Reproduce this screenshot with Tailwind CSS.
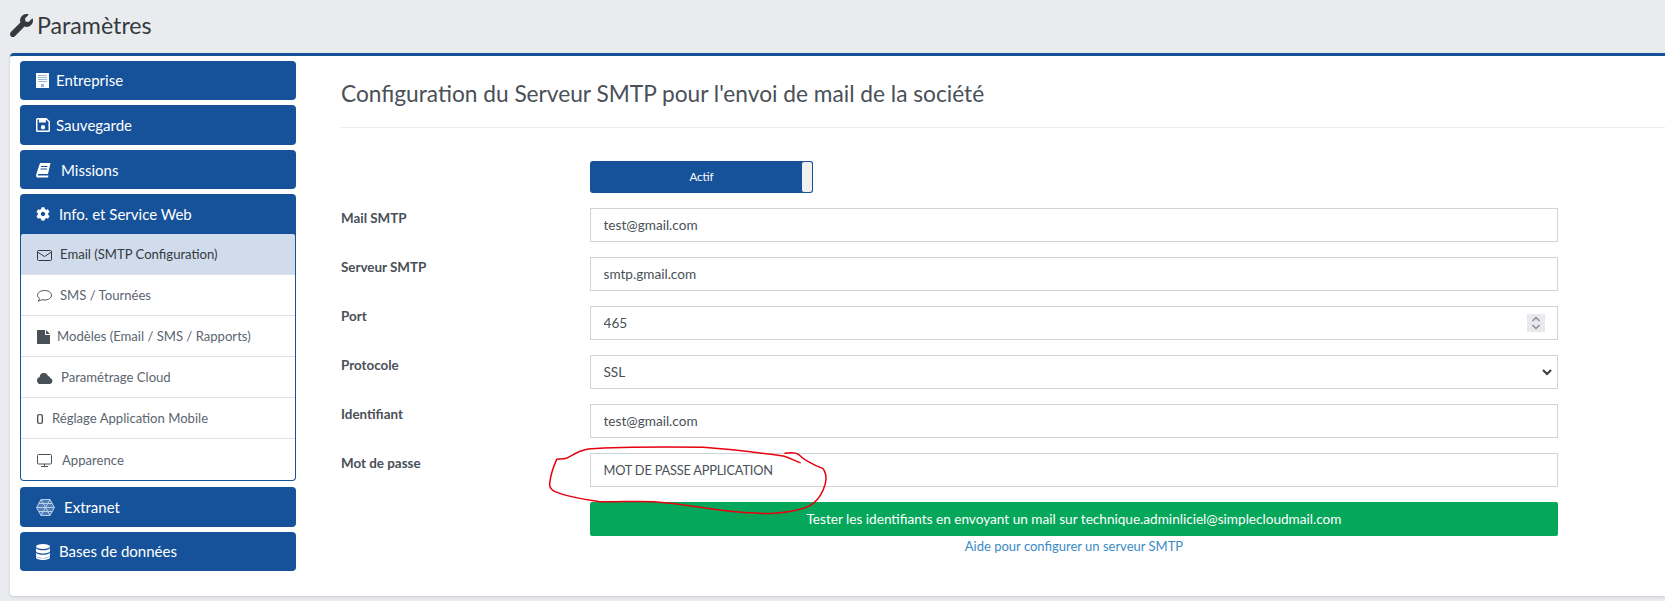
<!DOCTYPE html>
<html lang="fr">
<head>
    <meta charset="UTF-8">
    <title>Paramètres</title>
    <script src="https://cdn.jsdelivr.net/npm/@tailwindcss/browser@4"></script>
</head>
<body class="bg-[#e9ebee] text-[#495057] [font-family:Lato,'Open_Sans',sans-serif] overflow-hidden">
    <div class="relative w-[1665px] h-[601px] pl-[10px]">

        <!-- Page title -->
        <header class="h-[53px] flex items-center gap-[4px] text-[#343a40] pb-[2px]">
            <svg class="w-[23px] h-[23px] fill-[#343a40]" viewBox="0 0 512 512"><path d="M507.73 109.1c-2.24-9.03-13.54-12.09-20.12-5.51l-74.36 74.36-67.88-11.31-11.31-67.88 74.36-74.36c6.62-6.62 3.43-17.9-5.66-20.16-47.38-11.74-99.55.91-136.58 37.93-39.64 39.64-50.55 97.1-34.05 147.2L18.74 402.76c-24.99 24.99-24.99 65.51 0 90.5 24.99 24.99 65.51 24.99 90.5 0l213.21-213.21c50.12 16.71 107.47 5.68 147.37-34.22 37.07-37.07 49.7-89.32 37.91-136.73z"/></svg>
            <h1 class="text-[23.2px] leading-none">Paramètres</h1>
        </header>

        <!-- Card -->
        <div class="flex h-[543px] bg-white border-t-[3px] border-[#16529a] rounded-l-[4px] shadow-[0_1px_3px_rgba(0,0,0,0.15)] pl-[10px] pt-[5px]">

            <!-- Sidebar -->
            <nav class="w-[276px] flex flex-col gap-[5px] shrink-0 text-white text-[15px]">
                <a class="h-[39px] flex items-center pl-[16px] bg-[#16529a] rounded-[4px]">
                    <svg class="w-[13px] h-[15px] mr-[7px]" viewBox="0 0 13 15"><path fill="#fff" d="M0 0h13v15H0z"/><path fill="#9db8d8" d="M2 2h9v1H2zM2 4h9v1H2zM2 6h9v1H2zM2 8h9v1H2zM5 11h3v3H5z"/></svg>
                    Entreprise
                </a>
                <a class="h-[40px] flex items-center pl-[16px] bg-[#16529a] rounded-[4px]">
                    <svg class="w-[14px] h-[14px] mr-[6px]" viewBox="0 0 14 14"><path fill="#fff" d="M1.5 0H10.500L14 3.500V12.500A1.500 1.500 0 0 1 12.500 14H1.500A1.500 1.500 0 0 1 0 12.500V1.500A1.500 1.500 0 0 1 1.500 0zM1.500 1.500V12.500H12.500V4.100L9.900 1.500V4.500H3V1.500zM7 7A2.200 2.200 0 1 1 7 11.400 2.200 2.200 0 0 1 7 7z"/></svg>
                    Sauvegarde
                </a>
                <a class="h-[39px] flex items-center pl-[16px] pt-[1px] bg-[#16529a] rounded-[4px]">
                    <svg class="w-[15px] h-[15px] mr-[10px]" viewBox="0 0 15 15"><path fill="#fff" d="M4 0H14.500L12 11H2.700C1.800 11 1.500 12.500 2.500 12.500H12.500L12 14.500H2C.5 14.500-.300 13 .2 11.500z"/><path fill="#16529a" d="M5 3h6.500v1H5zM4.500 5.500H11v1H4.500z"/></svg>
                    Missions
                </a>

                <!-- Open group -->
                <div class="flex flex-col bg-[#16529a] rounded-[4px] mb-px">
                    <a class="h-[40px] flex items-center pl-[16px]">
                        <svg class="w-[14px] h-[14px] mr-[9px] fill-white" viewBox="0 0 512 512"><path d="M487.4 315.7l-42.6-24.6c4.3-23.2 4.3-47 0-70.2l42.6-24.6c4.9-2.8 7.1-8.6 5.5-14-11.1-35.6-30-67.8-54.7-94.6-3.8-4.1-10-5.1-14.8-2.3L380.8 110c-17.9-15.4-38.5-27.3-60.8-35.1V25.8c0-5.6-3.9-10.5-9.4-11.7-36.7-8.2-74.3-7.8-109.2 0-5.5 1.2-9.4 6.1-9.4 11.7V75c-22.2 7.9-42.8 19.8-60.8 35.1L88.7 85.5c-4.9-2.8-11-1.9-14.8 2.3-24.7 26.7-43.6 58.9-54.7 94.6-1.7 5.4.6 11.2 5.5 14L67.3 221c-4.3 23.2-4.3 47 0 70.2l-42.6 24.6c-4.9 2.8-7.1 8.6-5.5 14 11.1 35.6 30 67.8 54.7 94.6 3.8 4.1 10 5.1 14.8 2.3l42.6-24.6c17.9 15.4 38.5 27.3 60.8 35.1v49.2c0 5.6 3.9 10.5 9.4 11.7 36.7 8.2 74.3 7.8 109.2 0 5.500-1.2 9.4-6.1 9.4-11.7v-49.2c22.2-7.9 42.8-19.8 60.8-35.1l42.6 24.6c4.9 2.8 11 1.9 14.8-2.3 24.7-26.7 43.6-58.9 54.7-94.6 1.5-5.5-.7-11.3-5.6-14.1zM256 336c-44.1 0-80-35.9-80-80s35.9-80 80-80 80 35.9 80 80-35.9 80-80 80z"/></svg>
                        Info. et Service Web
                    </a>
                    <ul class="mx-px mb-px bg-white rounded-[3px] text-[13.1px] text-[#5b6570] divide-y divide-[#dee2e6]">
                        <li class="h-[41px] flex items-center pl-[16px] pt-[2px] bg-[#d0dcec] rounded-t-[3px] text-[#343a40]">
                            <svg class="w-[15px] h-[11px] mr-[8px] fill-none stroke-[#343a40]" viewBox="0 0 15 11"><rect x=".5" y=".5" width="14" height="10" rx="1"/><path d="M.5 2l7 4.500 7-4.500"/></svg>
                            Email (SMTP Configuration)
                        </li>
                        <li class="h-[41px] flex items-center pl-[16px] pt-[2px]">
                            <svg class="w-[15px] h-[12px] mr-[8px] fill-none stroke-[#495057]" viewBox="0 0 15 12"><path d="M7.500.5C3.600.5.500 2.600.500 5.200c0 1.300.8 2.400 2 3.200-.1.900-.6 1.800-1.300 2.600 1.300-.1 2.600-.6 3.500-1.300.9.200 1.800.3 2.800.3 3.900 0 7-2.100 7-4.800S11.400.5 7.500.5z"/></svg>
                            SMS / Tournées
                        </li>
                        <li class="h-[41px] flex items-center pl-[16px] pt-[2px]">
                            <svg class="w-[13px] h-[14px] mr-[7px]" viewBox="0 0 13 14"><path fill="#495057" d="M0 0H8V5H13V14H0zM9 0L13 4H9z"/></svg>
                            Modèles (Email / SMS / Rapports)
                        </li>
                        <li class="h-[41px] flex items-center pl-[16px] pt-[2px]">
                            <svg class="w-[16px] h-[11px] mr-[8px]" viewBox="0 0 16 11"><path fill="#495057" d="M3.500 11A3.500 3.500 0 0 1 2.700 4.100 4 4 0 0 1 7 0a4.200 4.200 0 0 1 4 2.900A3 3 0 0 1 13.400 5.200 3 3 0 0 1 13 11z"/></svg>
                            Paramétrage Cloud
                        </li>
                        <li class="h-[41px] flex items-center pl-[16px] pt-[2px]">
                            <svg class="w-[6px] h-[10px] mr-[9px] fill-none stroke-[#343a40] stroke-[1.200]" viewBox="0 0 6 10"><rect x=".75" y=".75" width="4.500" height="8.500" rx=".8"/></svg>
                            Réglage Application Mobile
                        </li>
                        <li class="h-[41px] flex items-center pl-[16px] pt-[2px]">
                            <svg class="w-[15px] h-[13px] mr-[10px] fill-none stroke-[#495057]" viewBox="0 0 15 13"><rect x=".5" y=".5" width="14" height="9.500" rx="1"/><path d="M7.500 10v2.500M4 12.500h7"/></svg>
                            Apparence
                        </li>
                    </ul>
                </div>

                <a class="h-[40px] flex items-center pl-[16px] bg-[#16529a] rounded-[4px]">
                    <svg class="w-[19px] h-[17px] mr-[9px] fill-none stroke-[#b9cfe8]" viewBox="0 0 19 17"><path fill="#4f7fb8" d="M5 .5h9l4.500 8-4.500 8H5L.5 8.500z"/><path d="M5 .5l9 16M14 .5l-9 16M.5 8.500h18M3 4.500h13M3 12.500h13"/></svg>
                    Extranet
                </a>
                <a class="h-[39px] flex items-center pl-[16px] bg-[#16529a] rounded-[4px]">
                    <svg class="w-[14px] h-[16px] mr-[9px] fill-white" viewBox="0 0 14 16"><ellipse cx="7" cy="2.500" rx="7" ry="2.500"/><path d="M0 4.200c1 1.500 4 2.100 7 2.100s6-.6 7-2.100V7c0 1.400-3.100 2.500-7 2.500S0 8.400 0 7zM0 8.700c1 1.500 4 2.100 7 2.100s6-.6 7-2.100v2.800c0 1.400-3.100 2.500-7 2.500s-7-1.100-7-2.500zM0 12.200c1 1.500 4 2.100 7 2.100s6-.6 7-2.100v1.300c0 1.400-3.100 2.500-7 2.500s-7-1.100-7-2.500z"/></svg>
                    Bases de données
                </a>
            </nav>

            <!-- Main -->
            <main class="flex-1 pl-[45px] text-[13.6px]">
                <h2 class="h-[67px] flex items-center text-[22.7px] text-[#495057] border-b border-[#e9ecef] mb-[33px] pt-[1px]">Configuration du Serveur SMTP pour l'envoi de mail de la société</h2>

                <div class="grid grid-cols-[249px_968px] gap-y-[15px]">
                    <div></div>
                    <div class="w-[223px] h-[32px] flex bg-[#16529a] rounded-[3px] text-white text-[11.5px]">
                        <span class="flex-1 flex items-center justify-center pl-[12px]">Actif</span>
                        <span class="w-[12px] bg-[#f0f0f0] border border-[#16529a] rounded-[3px]"></span>
                    </div>

                    <label class="font-bold text-[13.4px]">Mail SMTP</label>
                    <input class="h-[34px] px-[12.500px] border border-[#ced4da] text-[#495057]" value="test@gmail.com">

                    <label class="font-bold text-[13.4px]">Serveur SMTP</label>
                    <input class="h-[34px] px-[12.500px] border border-[#ced4da] text-[#495057]" value="smtp.gmail.com">

                    <label class="font-bold text-[13.4px]">Port</label>
                    <div class="relative">
                        <input class="w-full h-[34px] px-[12.500px] border border-[#ced4da] text-[#495057]" value="465">
                        <span class="absolute right-[13px] top-[8px] w-[18px] h-[18px] bg-[#e9e9ed] flex items-center justify-center">
                            <svg class="w-[10px] h-[14px] fill-none stroke-[#8a8a95] stroke-[1.500]" viewBox="0 0 10 14"><path d="M1.500 5L5 1.500 8.500 5M1.500 9L5 12.500 8.500 9"/></svg>
                        </span>
                    </div>

                    <label class="font-bold text-[13.4px]">Protocole</label>
                    <div class="relative">
                        <select class="w-full h-[34px] px-[12.500px] appearance-none border border-[#ced4da] text-[#495057] bg-white"><option>SSL</option></select>
                        <svg class="absolute right-[6px] top-[13px] w-[10px] h-[8px] fill-none stroke-[#343a40] stroke-2 pointer-events-none" viewBox="0 0 10 8"><path d="M1 2l4 4 4-4"/></svg>
                    </div>

                    <label class="font-bold text-[13.4px]">Identifiant</label>
                    <input class="h-[34px] px-[12.500px] border border-[#ced4da] text-[#495057]" value="test@gmail.com">

                    <label class="font-bold text-[13.4px]">Mot de passe</label>
                    <input class="h-[34px] px-[12.500px] border border-[#ced4da] text-[#495057] text-[12.800px] tracking-[-0.2px]" value="MOT DE PASSE APPLICATION">

                    <div></div>
                    <div class="flex flex-col items-center">
                        <button class="w-full h-[34px] bg-[#05a75a] rounded-[2px] text-white">Tester les identifiants en envoyant un mail sur technique.adminliciel@simplecloudmail.com</button>
                        <a class="text-[#3a8bc4] text-[13px] leading-[20px]">Aide pour configurer un serveur SMTP</a>
                    </div>
                </div>
            </main>
        </div>

        <!-- Hand-drawn annotation over the password field -->
        <svg class="absolute left-[520px] top-[420px] w-[340px] h-[150px] fill-none stroke-[#e8000f] stroke-[4.500] pointer-events-none" viewBox="0 0 1020 450">
            <path stroke-linecap="round" stroke-linejoin="round" d="M795 100C810 98 825 96 835 103C850 118 880 135 908 145C918 155 920 175 916 190C910 215 895 240 880 250C860 265 820 276 760 280C710 282 660 277 600 270C540 263 480 250 400 245C340 242 290 247 240 245C190 238 140 230 105 215C92 208 88 200 89 190C92 165 100 140 110 118C120 116 130 120 145 112C160 104 175 92 205 87C280 82 400 80 550 82C630 88 710 97 790 108C810 114 825 122 840 128"/>
        </svg>
    </div>
</body>
</html>
